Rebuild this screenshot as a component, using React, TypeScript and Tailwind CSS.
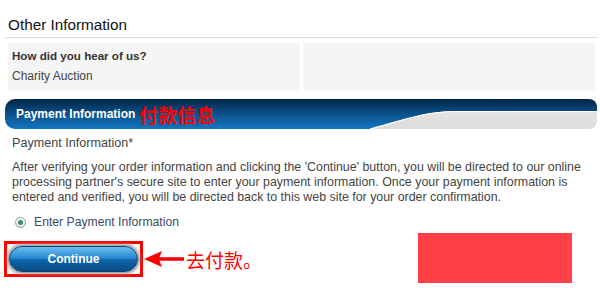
import React from 'react';

const HeaderBar = () => (
  <div className="relative ml-[5px] h-[30px] w-[592px] overflow-hidden rounded-l-[10px] rounded-r-[8px] bg-[linear-gradient(#e9e9e9,#dcdcdc)]">
    {/* wave shape of the blue band */}
    <svg className="absolute inset-0" width="592" height="30" viewBox="0 0 592 30">
      <defs>
        <linearGradient id="blue" x1="0" y1="0" x2="0" y2="1">
          <stop offset="0" stopColor="#022444" />
          <stop offset="0.45" stopColor="#0a4d84" />
          <stop offset="1" stopColor="#1277c2" />
        </linearGradient>
      </defs>
      <path d="M0 0 H592 V12 H450 C420 12 395 22 365 30 H0 Z" fill="url(#blue)" />
      <path d="M365 30 C395 22 420 12.5 450 12.5 H592" fill="none" stroke="#ffffff" strokeWidth="1.2" />
    </svg>
    <div className="relative flex h-full items-center gap-[4px] pl-[11px]">
      <span className="text-[12px] font-bold text-white">Payment Information</span>
      <span className="font-['Noto_Sans_CJK_SC',sans-serif] text-[19px] font-bold leading-none text-[#ff0000]">付款信息</span>
    </div>
  </div>
);

export default function App() {
  return (
    <div className="relative h-[288px] w-[600px] overflow-hidden bg-white font-['Liberation_Sans',Arial,sans-serif] text-[12px] text-[#444]">
      {/* Other Information */}
      <div className="ml-[5px] flex h-[38px] w-[593px] items-end border-b border-[#dddddd] pb-[2px] pl-[3px]">
        <h2 className="text-[15.3px] leading-[20px] text-[#111]">Other Information</h2>
      </div>
      <div className="ml-[8px] mt-[5px] flex gap-[3px]">
        <div className="h-[48px] w-[292px] bg-[#f5f5f5] px-[4px] pt-[3px] leading-[20px]">
          <div className="text-[11.6px] font-bold text-[#333]">How did you hear of us?</div>
          <div className="text-[#444]">Charity Auction</div>
        </div>
        <div className="h-[48px] w-[292px] bg-[#f5f5f5]" />
      </div>

      {/* Payment Information */}
      <div className="mt-[8px]">
        <HeaderBar />
      </div>
      <div className="ml-[12px] mt-[6px] text-[12.6px] leading-[16px] text-[#444]">Payment Information*</div>
      <p className="ml-[12px] mt-[9px] w-[585px] text-[12.4px] leading-[15px] text-[#444]">
        After verifying your order information and clicking the 'Continue' button, you will be directed to our online
        <br />
        processing partner's secure site to enter your payment information. Once your payment information is
        <br />
        entered and verified, you will be directed back to this web site for your order confirmation.
      </p>
      <div className="ml-[15px] mt-[9px] flex h-[16px] items-center gap-[8px]">
        <span className="flex h-[11px] w-[11px] items-center justify-center rounded-full border border-[#8a9aaa] bg-[linear-gradient(#fff,#e4e8ee)]">
          <span className="h-[5px] w-[5px] rounded-full bg-[#3a8a6a]" />
        </span>
        <span className="text-[12.2px] text-[#3c4a6a]">Enter Payment Information</span>
      </div>

      {/* Continue button */}
      <div className="ml-[4px] mt-[11px] flex items-center">
        <div className="border-[3px] border-[#ff0000] bg-white p-[2px]">
          <button className="flex h-[26px] w-[129px] items-center justify-center rounded-full border border-[#0b3f6e] bg-[linear-gradient(#6cbdf0,#2a8ad2_45%,#0c63a8_55%,#0a4d86)] text-[12px] font-bold text-white shadow-[0_0_3px_2px_#9a9a9a]">
            Continue
          </button>
        </div>
        <svg width="40" height="16" viewBox="0 0 40 16" className="ml-[1px]">
          <path d="M0 8 L18 0 L15.5 6.3 H40 V9.7 H15.5 L18 16 Z" fill="#ff0000" />
        </svg>
        <span className="ml-[2px] font-['Noto_Sans_CJK_SC',sans-serif] text-[19px] leading-none text-[#ff0000]">去付款。</span>
      </div>

      {/* redaction block */}
      <div className="absolute left-[418px] top-[233px] h-[50px] w-[154px] bg-[#ff4046]" />
    </div>
  );
}
